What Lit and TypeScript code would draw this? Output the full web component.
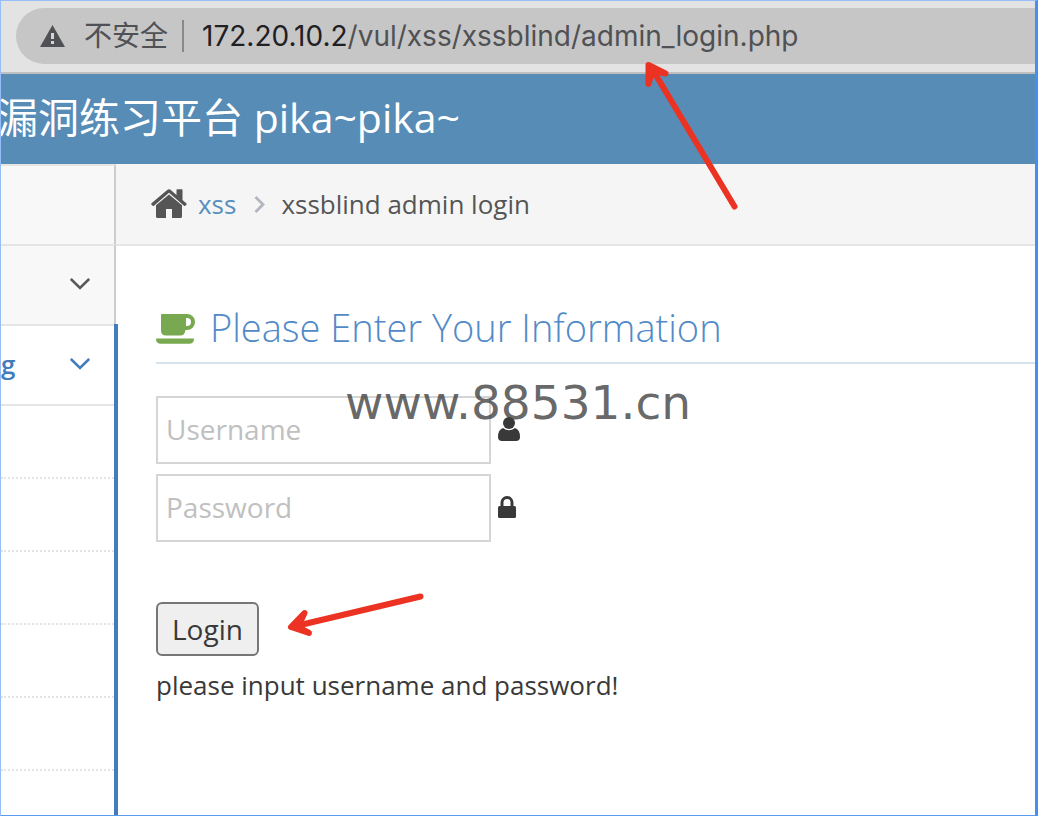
import { LitElement, html, css } from "lit";
import { customElement } from "lit/decorators.js";

@customElement("app-root")
export class AppRoot extends LitElement {
  static styles = css`
    :host {
      display: block;
      font-family: "Open Sans", "Noto Sans CJK SC", sans-serif;
      font-size: 26px;
      color: #393939;
    }
    * {
      box-sizing: border-box;
    }
    svg {
      display: block;
      flex: none;
    }
    .window {
      position: relative;
      display: flex;
      flex-direction: column;
      min-height: 100vh;
      overflow: hidden;
      background: #fff;
      border: 1px solid #94bdf9;
      border-right: 3px solid #448ef6;
      border-bottom: 2px solid #5c9cf0;
    }
    .toolbar {
      padding: 7px 0 8px 15px;
      background: #e3e3e3;
      border-bottom: 2px solid #bfbfbf;
    }
    .address {
      display: flex;
      align-items: center;
      height: 56px;
      padding-left: 24px;
      border-radius: 28px 0 0 28px;
      background: #c6c6c6;
      color: #505154;
      font-family: Inter, "Noto Sans CJK SC", sans-serif;
      font-size: 28px;
      white-space: nowrap;
    }
    .insecure {
      margin-left: 19px;
      padding-right: 14px;
      line-height: 32px;
      border-right: 2px solid #88898b;
    }
    .url {
      margin-left: 18px;
    }
    .host {
      color: #1f2023;
    }
    .navbar {
      display: flex;
      align-items: center;
      height: 90px;
      padding-bottom: 4px;
      background: #578cb6;
      color: #fff;
    }
    .brand {
      margin-left: -4px;
      color: inherit;
      text-decoration: none;
      font-size: 41px;
      line-height: 56px;
      white-space: nowrap;
    }
    .body {
      flex: 1;
      display: flex;
    }
    .sidebar {
      flex: none;
      display: flex;
      flex-direction: column;
      width: 115px;
    }
    .item {
      display: flex;
      align-items: center;
      justify-content: space-between;
      width: 100%;
      height: 80px;
      padding: 0 24px 2px 0;
      border: 0;
      border-top: 2px solid #e5e5e5;
      border-right: 2px solid #ccc;
      background: #f8f8f8;
      color: #585858;
      font: inherit;
    }
    .group {
      flex: 1;
      position: relative;
      margin-right: -2px;
      border-right: 4px solid #427cba;
      background: #fff;
    }
    .group .item {
      border-right: 0;
      background: #fff;
      color: #427cba;
      font-weight: 600;
    }
    .submenu {
      margin: 0;
      padding: 0;
      list-style: none;
      border-top: 2px solid #e5e5e5;
    }
    .submenu li {
      height: 73px;
      border-bottom: 2px dotted #e4e4e4;
    }
    .submenu li:last-child {
      height: 44px;
      border: 0;
    }
    .push {
      margin-left: auto;
    }
    .main {
      flex: 1;
      min-width: 0;
    }
    .crumbs {
      display: flex;
      align-items: center;
      height: 82px;
      padding-left: 35px;
      background: #f5f5f5;
      border-bottom: 2px solid #e5e5e5;
      color: #555;
      white-space: nowrap;
    }
    .crumbs a {
      margin: 0 18px 0 11px;
      color: #578fbe;
      text-decoration: none;
    }
    .crumbs span {
      margin-left: 16px;
    }
    .content {
      padding: 48px 0 40px 40px;
    }
    h4 {
      display: flex;
      align-items: center;
      height: 70px;
      margin: 0 0 32px;
      padding-bottom: 2px;
      border-bottom: 2px solid #d5e3ef;
      color: #528ac8;
      font-size: 38px;
      font-weight: 300;
      gap: 14px;
      white-space: nowrap;
    }
    h4 svg {
      margin-top: 3px;
    }
    .field {
      display: flex;
      align-items: center;
      gap: 7px;
      margin-bottom: 10px;
    }
    .field svg {
      margin-bottom: 2px;
    }
    input {
      width: 335px;
      height: 68px;
      padding: 0 8px 2px;
      border: 2px solid #d5d5d5;
      border-radius: 0;
      background: #fff;
      color: #858585;
      font: inherit;
      font-size: 28px;
    }
    input::placeholder {
      color: #c0c0c0;
      opacity: 1;
    }
    .login {
      display: block;
      height: 54px;
      margin-top: 60px;
      padding: 0 14px;
      border: 2px solid #767676;
      border-radius: 6px;
      background: #efefef;
      color: #393939;
      font: inherit;
      font-size: 28px;
    }
    .notice {
      margin: 9px 0 0;
      line-height: 40px;
    }
    .watermark {
      position: absolute;
      left: 344px;
      top: 372px;
      color: rgba(64, 64, 64, 0.8);
      font-family: "DejaVu Sans", sans-serif;
      font-size: 47px;
      line-height: 60px;
      pointer-events: none;
    }
    .arrow {
      position: absolute;
      fill: none;
      stroke: #ec3323;
      stroke-width: 6;
      stroke-linecap: round;
      stroke-linejoin: round;
      pointer-events: none;
    }
    .arrow-url {
      left: 639px;
      top: 55px;
    }
    .arrow-login {
      left: 279px;
      top: 585px;
    }
  `;

  private chevron() {
    return html`<svg class="push" width="20" height="12" viewBox="0 0 20 12" fill="none" stroke="currentColor" stroke-width="2.6" aria-hidden="true">
      <path d="M.8 1l9.2 9 9.2-9" />
    </svg>`;
  }

  render() {
    return html`
      <div class="window">
        <div class="toolbar">
          <div class="address">
            <svg width="25" height="22" viewBox="0 0 25 22" aria-hidden="true">
              <path d="M12.500 0L25 22H0z" fill="#505154" />
              <path d="M11 8h3v6h-3zM11 16h3v3h-3z" fill="#d4d4d4" />
            </svg>
            <span class="insecure">不安全</span>
            <span class="url"><span class="host">172.20.10.2</span>/vul/xss/xssblind/admin_login.php</span>
          </div>
        </div>
        <header class="navbar"><a class="brand" href="#">漏洞练习平台 pika~pika~</a></header>
        <div class="body">
          <nav class="sidebar">
            <button class="item" aria-label="Home"></button>
            <button class="item" aria-label="Expand menu">${this.chevron()}</button>
            <div class="group">
              <button class="item"><span>g</span>${this.chevron()}</button>
              <ul class="submenu">
                <li></li><li></li><li></li><li></li><li></li><li></li>
              </ul>
            </div>
          </nav>
          <main class="main">
            <div class="crumbs">
              <svg width="36" height="30" viewBox="0 0 36 30" fill="#555" aria-hidden="true">
                <path d="M18 5.500L5 16.300V27.500Q5 29 6.500 29H15v-9h6v9h8.500Q31 29 31 27.500V16.300z" />
                <path d="M25.500 6V1q0-.7.700-.7h4.600q.7 0 .7.700v10l4 3.400q.6.500 0 1l-1.200 1.400q-.5.500-1 .1L18 3.700 2.700 16.900q-.5.400-1-.1L.400 15.400q-.5-.6.100-1.100L16.200 1q1.800-1.400 3.600 0z" />
              </svg>
              <a href="#">xss</a>
              <svg width="11" height="18" viewBox="0 0 11 18" fill="none" stroke="#b2b6bf" stroke-width="2.800" aria-hidden="true">
                <path d="M1.500 2l7.500 7.500L1.500 17" />
              </svg>
              <span>xssblind admin login</span>
            </div>
            <div class="content">
              <h4>
                <svg width="40" height="30" viewBox="0 0 40 30" fill="#78a84f" aria-hidden="true">
                  <path fill-rule="evenodd" d="M5 1q0-1 1-1H31a8 8 0 0 1 0 16H29.500Q29 21.500 24 21.500H10Q5 21.500 5 16.500zM30 4v8h1a4 4 0 0 0 0-8z" />
                  <path d="M0 24.500H38q0 5.300-5 5.300H5q-5 0-5-5.300z" />
                </svg>
                Please Enter Your Information
              </h4>
              <form @submit=${(e: Event) => e.preventDefault()}>
                <label class="field">
                  <input type="text" name="username" placeholder="Username" aria-label="Username" />
                  <svg width="22" height="24" viewBox="0 0 22 24" fill="#393939" aria-hidden="true">
                    <circle cx="11" cy="6" r="6" />
                    <path d="M5 11q6 4.500 12 0 5 1.500 5 9 0 4-4 4H4q-4 0-4-4 0-7.500 5-9z" />
                  </svg>
                </label>
                <label class="field">
                  <input type="password" name="password" placeholder="Password" aria-label="Password" />
                  <svg width="18" height="22" viewBox="0 0 18 22" fill="#393939" aria-hidden="true">
                    <path d="M4 11V6.500a5 5 0 0 1 10 0V11" fill="none" stroke="#393939" stroke-width="3" />
                    <rect y="10" width="18" height="12" rx="1.500" />
                  </svg>
                </label>
                <button class="login" type="submit">Login</button>
              </form>
              <p class="notice">please input username and password!</p>
            </div>
          </main>
        </div>
        <div class="watermark">www.88531.cn</div>
        <svg class="arrow arrow-url" width="104" height="160" viewBox="640 56 104 160" aria-hidden="true">
          <path d="M734.500 206.500L651 67" />
          <path d="M648.500 84V65l17 8.500-13-3z" />
        </svg>
        <svg class="arrow arrow-login" width="152" height="58" viewBox="280 586 152 58" aria-hidden="true">
          <path d="M420.500 596.500L296 626" />
          <path d="M304.500 613L291 627l18 6-11-6z" />
        </svg>
      </div>
    `;
  }
}
